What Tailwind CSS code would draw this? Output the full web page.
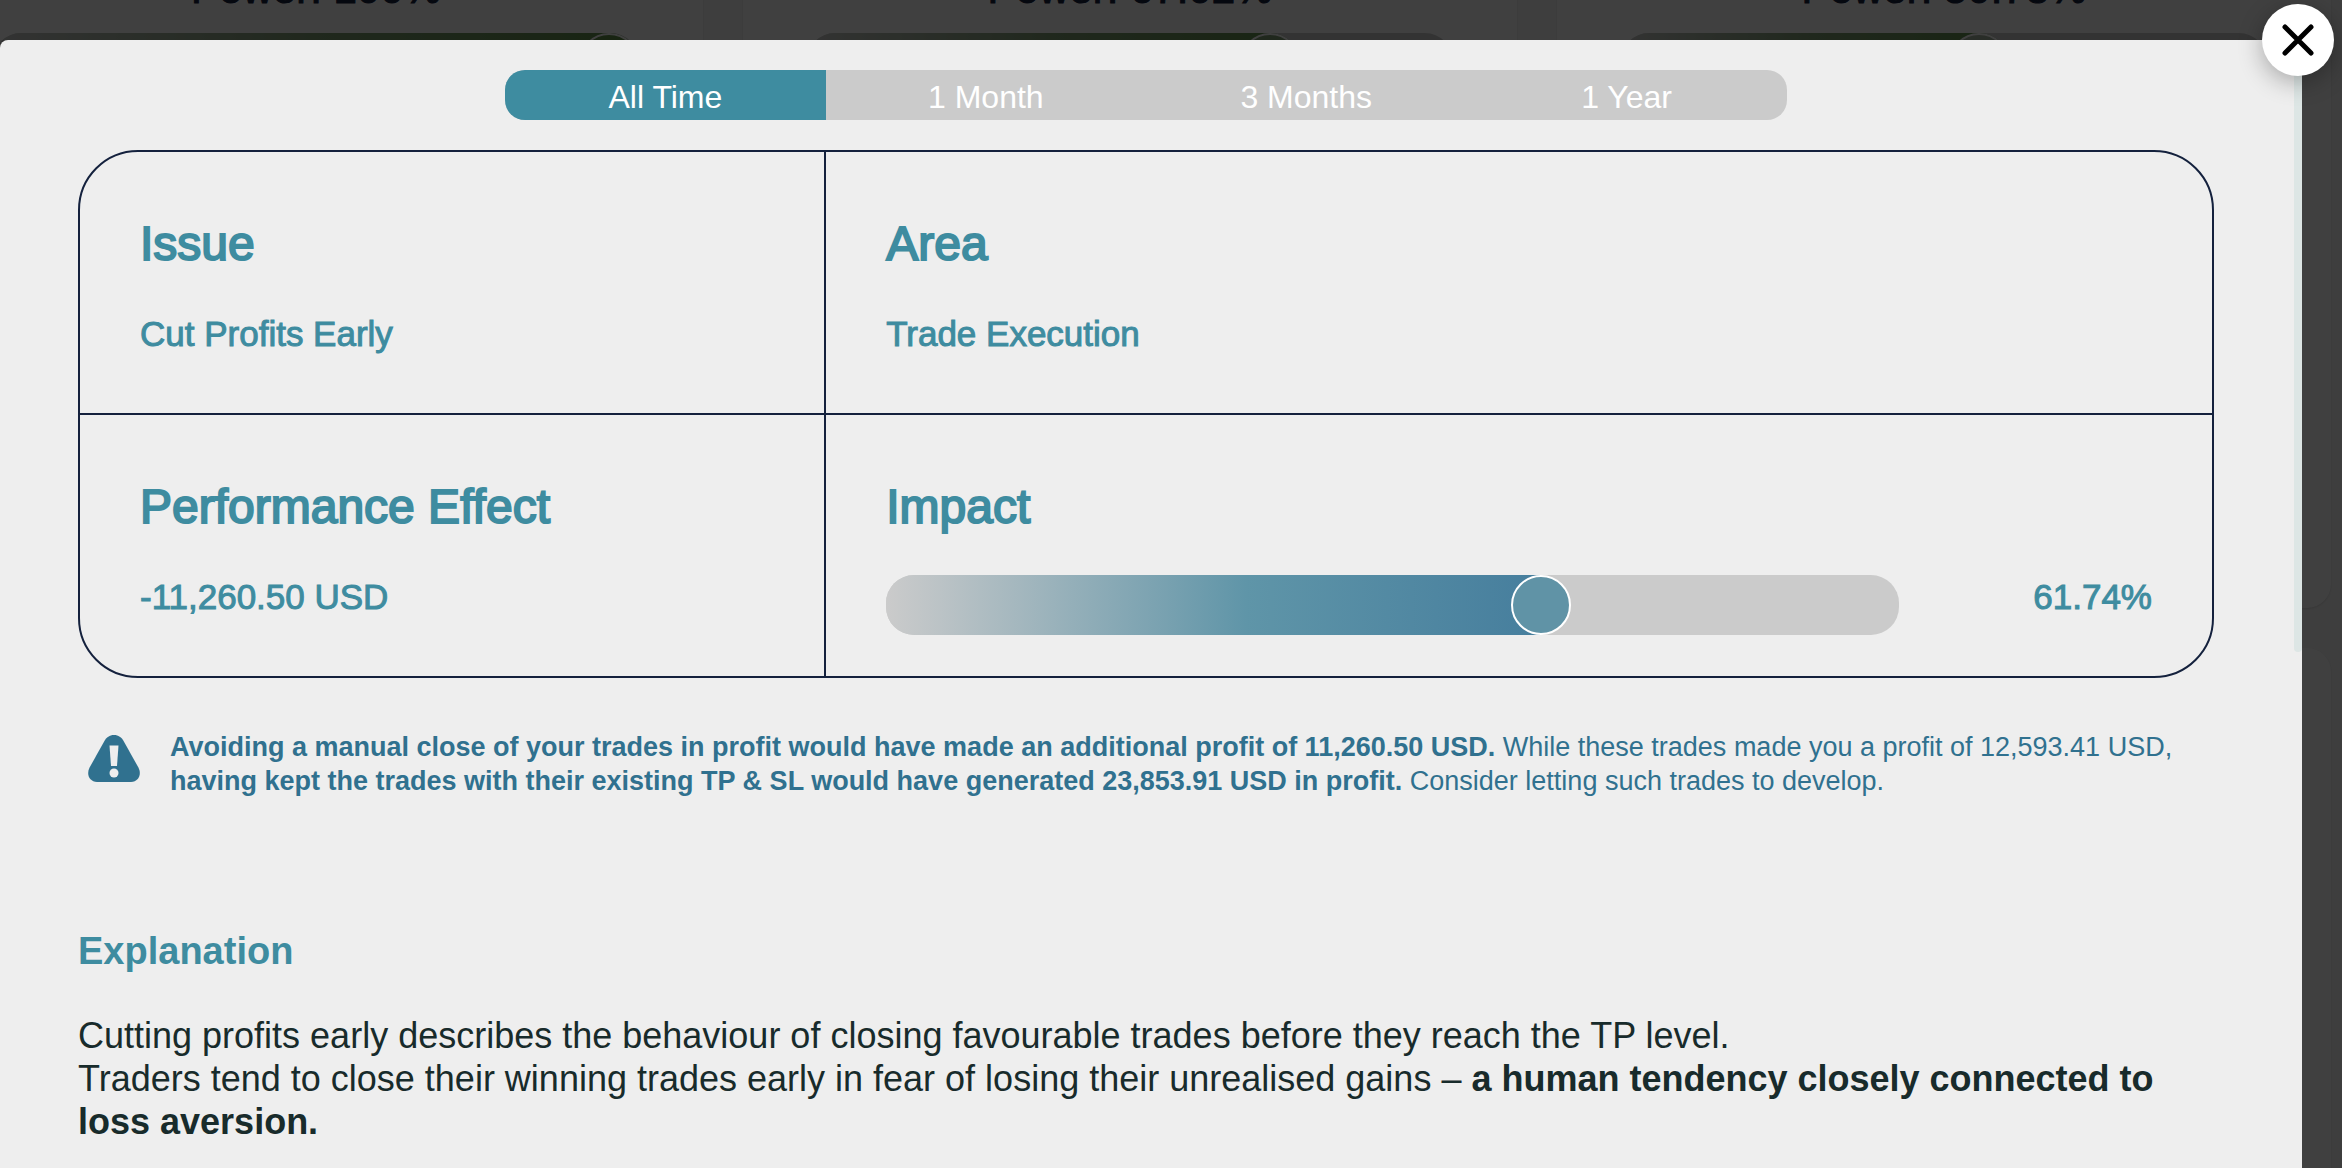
<!DOCTYPE html>
<html lang="en">
<head>
  <meta charset="UTF-8" />
  <meta name="viewport" content="width=device-width, initial-scale=1.0" />
  <title>Cut Profits Early</title>
  <script src="https://cdn.jsdelivr.net/npm/@tailwindcss/browser@4"></script>
</head>
<body class="h-screen overflow-hidden bg-[#f8f8f8] font-['Liberation_Sans',Arial,sans-serif]">

  <!-- Page behind the dialog ---------------------------------->
  <div class="absolute inset-0 overflow-hidden" aria-hidden="true">
    <div class="-mt-16 -ml-[71px] mr-[11px] grid grid-cols-3 gap-10 text-[42px] leading-[50px] text-[#14213d]">
      <div class="h-[672px] rounded-3xl bg-white px-16 pt-7 text-center shadow-sm">
        <p class="[-webkit-text-stroke:1px]">Power: 100%</p>
        <div class="mt-[19px] h-15 overflow-hidden rounded-[28px] bg-[#cbcbcb]">
          <div class="flex h-full justify-end rounded-r-full bg-linear-to-r from-[#cbcbcb] via-[#7f9e74] via-50% to-[#5f8f4a]" style="width: 100%">
            <span class="size-15 rounded-full border-2 border-white bg-[#5f8f4a]"></span>
          </div>
        </div>
      </div>
      <div class="h-[672px] rounded-3xl bg-white px-16 pt-7 text-center shadow-sm">
        <p class="[-webkit-text-stroke:1px]">Power: 67.02%</p>
        <div class="mt-[19px] h-15 overflow-hidden rounded-[28px] bg-[#cbcbcb]">
          <div class="flex h-full justify-end rounded-r-full bg-linear-to-r from-[#cbcbcb] via-[#7f9e74] via-50% to-[#5f8f4a]" style="width: 76.3%">
            <span class="size-15 rounded-full border-2 border-white bg-[#7f9e74]"></span>
          </div>
        </div>
      </div>
      <div class="h-[672px] rounded-3xl bg-white px-16 pt-7 text-center shadow-sm">
        <p class="[-webkit-text-stroke:1px]">Power: 50.78%</p>
        <div class="mt-[19px] h-15 overflow-hidden rounded-[28px] bg-[#cbcbcb]">
          <div class="flex h-full justify-end rounded-r-full bg-linear-to-r from-[#cbcbcb] via-[#7f9e74] via-50% to-[#5f8f4a]" style="width: 60.1%">
            <span class="size-15 rounded-full border-2 border-white bg-[#a5b39f]"></span>
          </div>
        </div>
      </div>
      <div class="h-[672px] rounded-3xl bg-white shadow-sm"></div>
      <div class="h-[672px] rounded-3xl bg-white shadow-sm"></div>
      <div class="h-[672px] rounded-3xl bg-white shadow-sm"></div>
    </div>
    <div class="absolute inset-0 bg-black/75"></div>
  </div>

  <!-- Dialog --------------------------------------------------->
  <div class="relative flex h-screen pt-10 pr-10">
    <main role="dialog" aria-label="Cut Profits Early" class="relative flex-1 rounded-tl-lg bg-[#eeeeee] pt-[30px] pr-[88px] pl-[78px]">

      <button aria-label="Close" class="absolute -top-9 -right-8 z-10 flex size-18 items-center justify-center rounded-full bg-white shadow-[0_6px_24px_rgba(0,0,0,0.3)]">
        <svg class="size-8" viewBox="0 0 32 32" fill="none" stroke="#000" stroke-width="5" stroke-linecap="round">
          <path d="M3 3 29 29M29 3 3 29" />
        </svg>
      </button>

      <!-- scrollbar thumb -->
      <div class="absolute top-0 right-0 h-[612px] w-2 rounded-b-full bg-[#dde6e5]"></div>

      <!-- Period tabs -->
      <nav class="mx-auto grid w-3/5 grid-cols-4 overflow-hidden rounded-[20px] bg-[#cbcbcb] text-[32px] leading-[46px] text-white">
        <button class="bg-[#3e8ca0] pt-1">All Time</button>
        <button class="pt-1">1 Month</button>
        <button class="pt-1">3 Months</button>
        <button class="pt-1">1 Year</button>
      </nav>

      <!-- Summary -->
      <section class="mt-[30px] grid grid-cols-[35%_65%] rounded-[60px] border-2 border-[#14213d] text-[35px] leading-[44px] text-[#3e8ca0]">
        <div class="border-r-2 border-b-2 border-[#14213d] px-15 pt-15 pb-[57px]">
          <h2 class="text-5xl/[64px] [-webkit-text-stroke:2px]">Issue</h2>
          <p class="mt-9 [-webkit-text-stroke:1px]">Cut Profits Early</p>
        </div>
        <div class="border-b-2 border-[#14213d] px-15 pt-15 pb-[57px]">
          <h2 class="text-5xl/[64px] [-webkit-text-stroke:2px]">Area</h2>
          <p class="mt-9 [-webkit-text-stroke:1px]">Trade Execution</p>
        </div>
        <div class="border-r-2 border-[#14213d] px-15 pt-15 pb-[57px]">
          <h2 class="text-5xl/[64px] [-webkit-text-stroke:2px]">Performance Effect</h2>
          <p class="mt-9 [-webkit-text-stroke:1px]">-11,260.50 USD</p>
        </div>
        <div class="px-15 pt-15 pb-10">
          <h2 class="text-5xl/[64px] [-webkit-text-stroke:2px]">Impact</h2>
          <div class="mt-9 flex items-start justify-between">
            <div role="meter" aria-label="Impact" aria-valuenow="61.74" class="relative h-15 w-4/5 rounded-[28px] bg-[#cbcbcb]">
              <div class="h-full rounded-l-[28px] bg-linear-to-r from-[#cbcbcb] via-[#5f95a8] via-55% to-[#467e9d]" style="width: 64.7%"></div>
              <span class="absolute top-0 size-15 rounded-full border-2 border-white bg-[#6093a6]" style="left: 61.74%"></span>
            </div>
            <p class="[-webkit-text-stroke:1px]">61.74%</p>
          </div>
        </div>
      </section>

      <!-- Hint -->
      <section class="mt-13 flex gap-[30px] pl-[10px] text-[27px] leading-[34px] text-[#30718f]">
        <svg class="h-14 w-[52px] shrink-0" viewBox="0 2 52 56" fill="none">
          <path fill="#30718f" d="M26 7c-4.500 0-7.500 2.300-9.700 6.200L1.600 39.500C-2 46.500 1.500 54 9 54h34c7.500 0 11-7.500 7.400-14.500L35.700 13.200C33.500 9.300 30.500 7 26 7z" />
          <path fill="#eee" d="M21.500 17.500h9L29 38h-6z" />
          <circle cx="26" cy="45" r="4.500" fill="#eee" />
        </svg>
        <p>
          <strong>Avoiding a manual close of your trades in profit would have made an additional profit of 11,260.50 USD.</strong>
          While these trades made you a profit of 12,593.41 USD,
          <strong>having kept the trades with their existing TP &amp; SL would have generated 23,853.91 USD in profit.</strong>
          Consider letting such trades to develop.
        </p>
      </section>

      <!-- Explanation -->
      <section class="mt-[130px]">
        <h3 class="text-[38px] leading-[46px] font-bold text-[#3e8ca0]">Explanation</h3>
        <p class="mt-10 text-4xl/[43px] text-[#182b2b]">
          Cutting profits early describes the behaviour of closing favourable trades before they reach the TP level.<br />
          Traders tend to close their winning trades early in fear of losing their unrealised gains –
          <strong>a human tendency closely connected to loss aversion.</strong>
        </p>
      </section>
    </main>
  </div>
</body>
</html>
